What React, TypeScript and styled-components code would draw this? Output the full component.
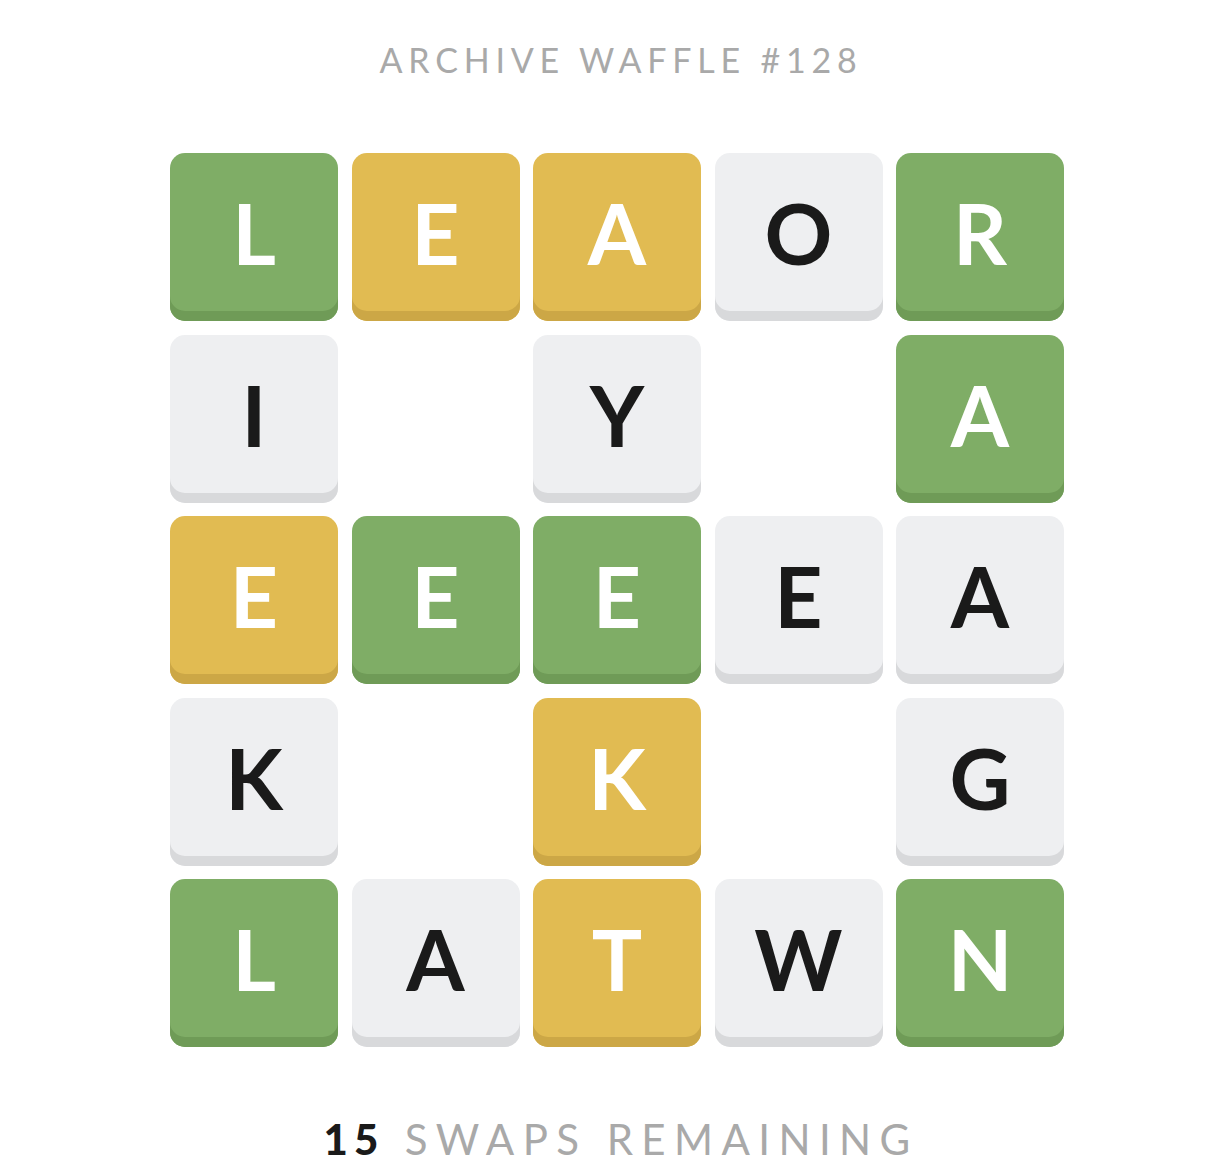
import React from "react";
import styled, { createGlobalStyle } from "styled-components";

const Global = createGlobalStyle`
  html, body { margin: 0; padding: 0; background: #ffffff; }
  body { font-family: Lato, "Noto Sans", sans-serif; }
`;

type Kind = "green" | "yellow" | "gray";

const palette: Record<Kind, { face: string; edge: string; ink: string }> = {
  green: { face: "#7fad66", edge: "#6f9b57", ink: "#ffffff" },
  yellow: { face: "#e1bb52", edge: "#cca746", ink: "#ffffff" },
  gray: { face: "#eeeff1", edge: "#d8d9db", ink: "#1a1a1a" },
};

const Page = styled.main`
  width: 1230px;
  display: flex;
  flex-direction: column;
  align-items: center;
`;

const Title = styled.h1`
  margin: 40px 0 0 0;
  padding-left: 12px;
  font-family: Lato, "Noto Sans", sans-serif;
  font-weight: 400;
  font-size: 34px;
  line-height: 40px;
  letter-spacing: 0.17em;
  color: #a9a9a9;
  white-space: nowrap;
`;

const Board = styled.div`
  margin-top: 73px;
  padding-left: 4px;
  display: grid;
  grid-template-columns: repeat(5, 168px);
  grid-auto-rows: 168px;
  gap: 13.5px;
`;

const Tile = styled.div<{ $kind: Kind }>`
  box-sizing: border-box;
  border-radius: 15px;
  background: ${(p) => palette[p.$kind].face};
  box-shadow: inset 0 -10px 0 ${(p) => palette[p.$kind].edge};
  color: ${(p) => palette[p.$kind].ink};
  display: flex;
  align-items: center;
  justify-content: center;
  padding-bottom: 8px;
  font-family: Lato, "Noto Sans", sans-serif;
  font-weight: 700;
  font-size: 84px;
  line-height: 1;
`;

const Hole = styled.div``;

const Footer = styled.p`
  margin: 71px 0 0 0;
  padding-left: 12px;
  font-family: Lato, "Noto Sans", sans-serif;
  font-size: 42px;
  line-height: 42px;
  letter-spacing: 0.2em;
  color: #a9a9a9;
  font-weight: 400;
  white-space: nowrap;
`;

const Count = styled.span`
  color: #1a1a1a;
  font-weight: 900;
  letter-spacing: 0.15em;
  margin-right: 20px;
`;

const rows: (string | null)[] = [
  "Lg", "Ey", "Ay", "On", "Rg",
  "In", null, "Yn", null, "Ag",
  "Ey", "Eg", "Eg", "En", "An",
  "Kn", null, "Ky", null, "Gn",
  "Lg", "An", "Ty", "Wn", "Ng",
];

const kindOf = (c: string): Kind => (c === "g" ? "green" : c === "y" ? "yellow" : "gray");

export default function App() {
  return (
    <Page>
      <Global />
      <Title>ARCHIVE WAFFLE #128</Title>
      <Board>
        {rows.map((cell, i) =>
          cell ? (
            <Tile key={i} $kind={kindOf(cell[1])}>
              {cell[0]}
            </Tile>
          ) : (
            <Hole key={i} />
          )
        )}
      </Board>
      <Footer>
        <Count>15</Count>SWAPS REMAINING
      </Footer>
    </Page>
  );
}
